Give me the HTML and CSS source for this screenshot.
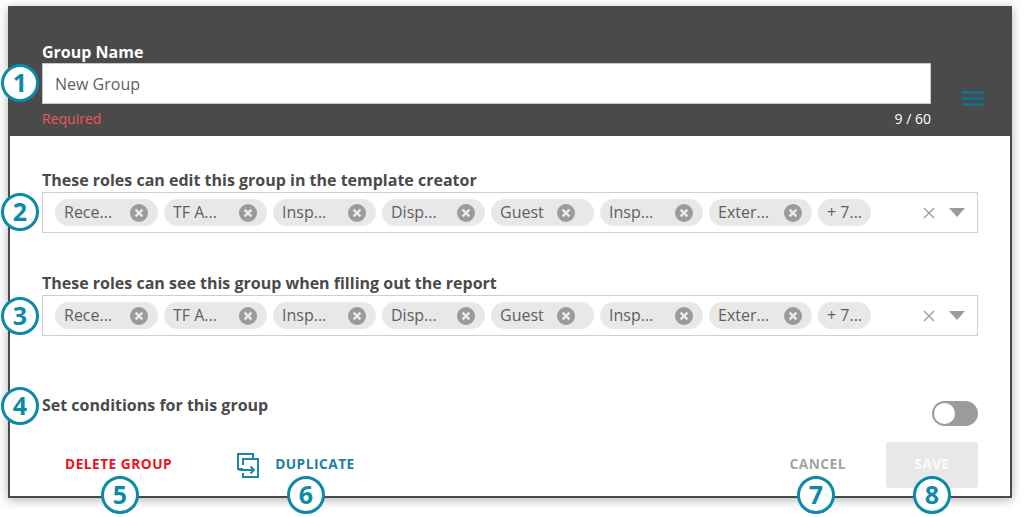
FILE: index.html
```html
<!DOCTYPE html>
<html lang="en">
<head>
<meta charset="utf-8">
<title>Group settings</title>
<link rel="stylesheet" href="styles.css">
</head>
<body>
<svg class="sprite" width="0" height="0" aria-hidden="true">
  <symbol id="chip-x" viewBox="0 0 18 18">
    <circle cx="9" cy="9" r="9" fill="#9b9b9b"/>
    <path d="M5.600 5.600l6.800 6.800M12.400 5.600l-6.800 6.800" stroke="#ececec" stroke-width="2.300" fill="none"/>
  </symbol>
</svg>
<main class="dialog">
  <header class="head">
    <div class="name-col">
      <div class="name-label">Group Name</div>
      <div class="name-input">New Group</div>
      <div class="name-meta"><span class="required">Required</span><span class="count">9 / 60</span></div>
    </div>
    <svg class="menu" width="22" height="15" viewBox="0 0 22 15" aria-hidden="true"><path d="M0 1.500h22M0 7.500h22M0 13.500h22" stroke="#007c9e" stroke-width="2"/></svg>
  </header>
  <section class="body">
    <div class="field">
      <div class="field-label">These roles can edit this group in the template creator</div>
      <div class="select">
        <span class="chip">Rece...<svg class="chip-x"><use href="#chip-x"/></svg></span>
        <span class="chip">TF A...<svg class="chip-x"><use href="#chip-x"/></svg></span>
        <span class="chip">Insp...<svg class="chip-x"><use href="#chip-x"/></svg></span>
        <span class="chip">Disp...<svg class="chip-x"><use href="#chip-x"/></svg></span>
        <span class="chip chip-guest">Guest<svg class="chip-x"><use href="#chip-x"/></svg></span>
        <span class="chip">Insp...<svg class="chip-x"><use href="#chip-x"/></svg></span>
        <span class="chip">Exter...<svg class="chip-x"><use href="#chip-x"/></svg></span>
        <span class="chip chip-more">+ 7...</span>
        <span class="select-tools">
          <svg width="12" height="12" viewBox="0 0 12 12" aria-hidden="true"><path d="M1 1l10 10M11 1L1 11" stroke="#9b9b9b" stroke-width="1.400" fill="none"/></svg>
          <svg width="16" height="9" viewBox="0 0 16 9" aria-hidden="true"><path d="M0 0h16L8 9z" fill="#9b9b9b"/></svg>
        </span>
      </div>
    </div>
    <div class="field field-see">
      <div class="field-label">These roles can see this group when filling out the report</div>
      <div class="select">
        <span class="chip">Rece...<svg class="chip-x"><use href="#chip-x"/></svg></span>
        <span class="chip">TF A...<svg class="chip-x"><use href="#chip-x"/></svg></span>
        <span class="chip">Insp...<svg class="chip-x"><use href="#chip-x"/></svg></span>
        <span class="chip">Disp...<svg class="chip-x"><use href="#chip-x"/></svg></span>
        <span class="chip chip-guest">Guest<svg class="chip-x"><use href="#chip-x"/></svg></span>
        <span class="chip">Insp...<svg class="chip-x"><use href="#chip-x"/></svg></span>
        <span class="chip">Exter...<svg class="chip-x"><use href="#chip-x"/></svg></span>
        <span class="chip chip-more">+ 7...</span>
        <span class="select-tools">
          <svg width="12" height="12" viewBox="0 0 12 12" aria-hidden="true"><path d="M1 1l10 10M11 1L1 11" stroke="#9b9b9b" stroke-width="1.400" fill="none"/></svg>
          <svg width="16" height="9" viewBox="0 0 16 9" aria-hidden="true"><path d="M0 0h16L8 9z" fill="#9b9b9b"/></svg>
        </span>
      </div>
    </div>
    <div class="conditions">
      <span class="field-label">Set conditions for this group</span>
      <span class="toggle"><span class="toggle-knob"></span></span>
    </div>
    <footer class="actions">
      <span class="action-delete">DELETE GROUP</span>
      <span class="action-duplicate">
        <svg class="duplicate-icon" width="23" height="25" viewBox="0 0 23 25" aria-hidden="true">
          <path d="M6 16H1V1h15v4" fill="none" stroke="#1c86a8" stroke-width="2"/>
          <path d="M6 12V6h15v18H6v-4" fill="none" stroke="#1c86a8" stroke-width="2"/>
          <path d="M2 17h15M13.500 13.500L17 17l-3.500 3.500" fill="none" stroke="#1c86a8" stroke-width="2"/>
        </svg>
        <span>DUPLICATE</span>
      </span>
      <span class="action-cancel">CANCEL</span>
      <span class="action-save">SAVE</span>
    </footer>
  </section>
  <span class="badge badge-1">1</span>
  <span class="badge badge-2">2</span>
  <span class="badge badge-3">3</span>
  <span class="badge badge-4">4</span>
  <span class="badge badge-5">5</span>
  <span class="badge badge-6">6</span>
  <span class="badge badge-7">7</span>
  <span class="badge badge-8">8</span>
</main>
</body>
</html>
```
FILE: styles.css
```css
* { box-sizing: border-box; }
html, body { margin: 0; padding: 0; background: #fff; }
body {
  width: 1025px;
  height: 517px;
  overflow: hidden;
  padding: 6px 0 0 8px;
  font-family: "Open Sans", "Noto Sans", sans-serif;
  color: #4a4a4a;
}
.sprite { position: absolute; }
.dialog {
  position: relative;
  width: 1004px;
  height: 492px;
  border: solid #4a4a4a;
  border-width: 0 2px 2px 2px;
  background: #fff;
  box-shadow: 0 2px 10px rgba(0, 0, 0, 0.3);
  display: flex;
  flex-direction: column;
}
.head {
  height: 130px;
  background: #4a4a4a;
  padding: 37px 0 0 32px;
  display: flex;
  align-items: flex-start;
  gap: 31px;
  flex: none;
}
.name-col { width: 889px; flex: none; }
.name-label { font-size: 16px; font-weight: 700; line-height: 18px; height: 20px; color: #fff; }
.name-input {
  height: 41px;
  background: #fff;
  border: 1px solid #c8c8c8;
  padding: 1px 0 0 12px;
  font-size: 16px;
  line-height: 38px;
  color: #5f5f5f;
}
.name-meta {
  display: flex;
  justify-content: space-between;
  font-size: 14px;
  line-height: 17px;
  margin-top: 6px;
}
.required { color: #ee5a50; }
.count { color: #fff; }
.menu { margin-top: 48px; flex: none; }
.body { flex: 1; padding: 34px 32px 0; display: flex; flex-direction: column; }
.field-label { font-size: 16px; font-weight: 700; line-height: 20px; color: #4a4a4a; }
.field-see { margin-top: 40px; }
.field-label + .select { margin-top: 2px; }
.select {
  height: 41px;
  border: 1px solid #cfcfcf;
  display: flex;
  align-items: center;
  gap: 6px;
  padding-left: 12px;
  width: 936px;
}
.chip {
  width: 103px;
  height: 27px;
  border-radius: 14px;
  background: #e8e8e8;
  display: flex;
  align-items: center;
  justify-content: space-between;
  padding: 0 10px 0 9px;
  font-size: 16px;
  line-height: 25px;
  color: #5f5f5f;
  white-space: nowrap;
  flex: none;
}
.chip-x { width: 18px; height: 18px; }
.chip-guest { padding-right: 19px; }
.chip-more { width: 53px; }
.select-tools { margin-left: auto; display: flex; align-items: center; gap: 14px; padding-right: 12px; }
.conditions { display: flex; justify-content: space-between; align-items: flex-start; margin-top: 59px; width: 936px; }
.toggle {
  width: 46px;
  height: 25px;
  border-radius: 13px;
  background: #9b9b9b;
  padding: 2px;
  margin-top: 6px;
  display: block;
}
.toggle-knob { display: block; width: 21px; height: 21px; border-radius: 50%; background: #fff; }
.actions { display: flex; align-items: center; height: 46px; margin-top: 16px; width: 936px; font-size: 13.700px; line-height: 18px; font-weight: 700; letter-spacing: 0.5px; }
.action-delete { color: #f0101e; margin-left: 23px; padding-bottom: 2px; }
.action-duplicate { color: #1c7f9f; margin-left: 65px; display: flex; align-items: center; gap: 15px; }
.action-duplicate span { padding-bottom: 2px; }
.action-cancel { color: #a3a3a3; margin-left: auto; padding-bottom: 2px; }
.action-save {
  width: 92px;
  height: 46px;
  margin-left: 40px;
  padding-bottom: 2px;
  border-radius: 3px;
  background: #e8e8e8;
  color: #fafafa;
  display: flex;
  align-items: center;
  justify-content: center;
}
.badge {
  position: absolute;
  width: 38px;
  height: 38px;
  border: 3px solid #0d8aa8;
  border-radius: 50%;
  background: #fff;
  color: #0d8aa8;
  font-size: 25px;
  font-weight: 700;
  line-height: 31px;
  text-align: center;
}
.badge-1 { left: -9px; top: 58px; }
.badge-2 { left: -9px; top: 187px; }
.badge-3 { left: -9px; top: 291px; }
.badge-4 { left: -9px; top: 381px; }
.badge-5 { left: 91px; top: 470px; }
.badge-6 { left: 277px; top: 470px; }
.badge-7 { left: 787px; top: 470px; }
.badge-8 { left: 903px; top: 470px; }
```
